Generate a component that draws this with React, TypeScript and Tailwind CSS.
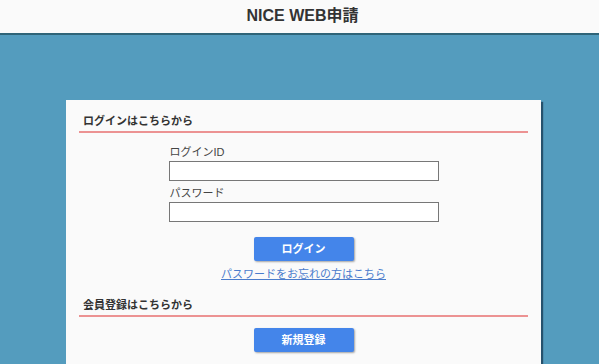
export default function App() {
  return (
    <div
      className="min-h-screen bg-[#549cbe] text-[#333]"
      style={{ fontFamily: '"Liberation Sans", "Noto Sans CJK JP", sans-serif' }}
    >
      <header className="h-[35px] bg-[#fafafa] border-b-2 border-[#2f6478] flex items-center justify-center">
        <h1 className="text-[16px] font-bold leading-none pl-[6px] pb-[2px] text-[#333]">NICE WEB申請</h1>
      </header>

      <div className="ml-[66px] mt-[65px] w-[475px] bg-[#fafafa] shadow-[2px_2px_1px_rgba(0,20,40,0.55)] px-[13px] pt-[13px] pb-[20px]">
        <h2 className="text-[11px] font-bold leading-[16px] pl-[4px] pb-[2px] border-b-2 border-[#ec9292]">
          ログインはこちらから
        </h2>

        <form className="flex flex-col items-center" onSubmit={(e) => e.preventDefault()}>
          <div className="w-[270px] mt-[11px]">
            <label className="block text-[11px] leading-[16px] pl-[1px] mb-[1px] text-[#444]">ログインID</label>
            <input type="text" className="block w-full h-[20px] border border-[#777] bg-white" />
          </div>
          <div className="w-[270px] mt-[4px]">
            <label className="block text-[11px] leading-[16px] pl-[1px] mb-[1px] text-[#444]">パスワード</label>
            <input type="password" className="block w-full h-[20px] border border-[#777] bg-white" />
          </div>
          <button
            type="submit"
            className="mt-[15px] w-[100px] h-[24px] bg-[#4485ea] text-white text-[11px] font-bold rounded-[2px] shadow-[1px_1px_2px_rgba(0,0,0,0.35)]"
          >
            ログイン
          </button>
          <a href="#" className="mt-[5px] text-[11px] leading-[16px] text-[#4a7ccc] underline">
            パスワードをお忘れの方はこちら
          </a>
        </form>

        <h2 className="mt-[15px] text-[11px] font-bold leading-[16px] pl-[4px] pb-[2px] border-b-2 border-[#ec9292]">
          会員登録はこちらから
        </h2>
        <div className="flex justify-center">
          <button
            type="button"
            className="mt-[11px] w-[100px] h-[24px] bg-[#4485ea] text-white text-[11px] font-bold rounded-[2px] shadow-[1px_1px_2px_rgba(0,0,0,0.35)]"
          >
            新規登録
          </button>
        </div>
      </div>
    </div>
  );
}
